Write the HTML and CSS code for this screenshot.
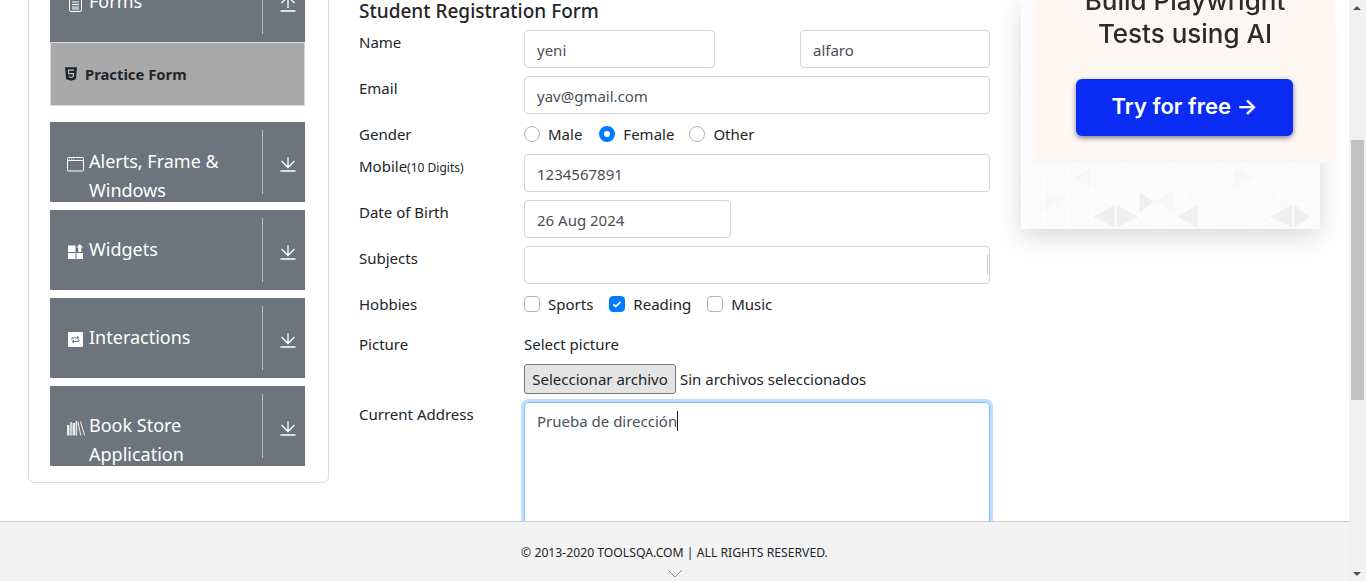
FILE: index.html
```html
<!DOCTYPE html>
<html lang="en">
<head>
    <meta charset="UTF-8" />
    <meta name="viewport" content="width=device-width, initial-scale=1" />
    <title>ToolsQA - Practice Form</title>
    <link rel="stylesheet" href="styles.css">
</head>
<body>
<div class="window">
    <div class="viewport">
        <div class="content">
            <aside class="sidebar">
                <div class="menu-item menu-open">
                    <div class="menu-title">
                        <svg class="menu-icon" viewBox="0 0 18 16"><rect x="2.500" y=".5" width="12" height="15" rx="1.500" fill="none" stroke="#fff"/><path d="M5 3.500h7M5 6h7M5 8.500h7M5 11h7M5 13h7" stroke="#fff"/></svg>
                        <span>Forms</span>
                    </div>
                    <div class="menu-arrow">
                        <svg class="arrow-icon" viewBox="0 0 16 16"><path d="M8 12V.5M1.500 7L8 .5 14.500 7M.5 15h15" fill="none" stroke="#fff" stroke-width="1.300"/></svg>
                    </div>
                </div>
                <div class="submenu-item">
                    <svg class="html-icon" viewBox="0 0 14 16"><path d="M0 0h14l-1.300 14L7 16l-5.700-2z" fill="#212529"/><path d="M10.500 3.500H4l.3 4h5.700l-.4 3.500L7 12l-2.600-1" fill="none" stroke="#c4c4c4" stroke-width="1.300"/></svg>
                    <span>Practice Form</span>
                </div>
                <div class="menu-item menu-first">
                    <div class="menu-title">
                        <svg class="menu-icon" viewBox="0 0 18 16"><rect x=".5" y="1.500" width="16" height="13.500" rx="1" fill="none" stroke="#fff"/><path d="M1 4.500h15" stroke="#fff"/><path d="M2 3h1M4 3h1M6 3h1" stroke="#fff" stroke-width=".8"/></svg>
                        <span>Alerts, Frame &amp; Windows</span>
                    </div>
                    <div class="menu-arrow">
                        <svg class="arrow-icon" viewBox="0 0 16 16"><path d="M8 1v10.500M1.500 5L8 11.500 14.500 5M.5 15h15" fill="none" stroke="#fff" stroke-width="1.300"/></svg>
                    </div>
                </div>
                <div class="menu-item">
                    <div class="menu-title">
                        <svg class="menu-icon" viewBox="0 0 18 16"><path d="M1 1.500h7.500V8H1zM1 9h7.500v6H1zM9.500 9H16v6H9.500zM12.800 0L16 3.500h-1.700V8h-3V3.500H9.500z" fill="#fff"/></svg>
                        <span>Widgets</span>
                    </div>
                    <div class="menu-arrow">
                        <svg class="arrow-icon" viewBox="0 0 16 16"><path d="M8 1v10.500M1.500 5L8 11.500 14.500 5M.5 15h15" fill="none" stroke="#fff" stroke-width="1.300"/></svg>
                    </div>
                </div>
                <div class="menu-item">
                    <div class="menu-title">
                        <svg class="menu-icon" viewBox="0 0 18 16"><rect x="1" y="0" width="15" height="15" rx="1" fill="#fff"/><path d="M5 8V5.800h6.500M10 4.200l1.800 1.600L10 7.400M12 7.200v2.300H5.500M7 8l-1.800 1.500L7 11" fill="none" stroke="#6c757d" stroke-width="1"/></svg>
                        <span>Interactions</span>
                    </div>
                    <div class="menu-arrow">
                        <svg class="arrow-icon" viewBox="0 0 16 16"><path d="M8 1v10.500M1.500 5L8 11.500 14.500 5M.5 15h15" fill="none" stroke="#fff" stroke-width="1.300"/></svg>
                    </div>
                </div>
                <div class="menu-item">
                    <div class="menu-title">
                        <svg class="menu-icon" viewBox="0 0 18 16"><path d="M0 5h2.500v10.500H0zM3.200 2h1.600v13.500H3.200zM5.500 3H8v12.500H5.500zM8.600 1h1.600v14.500H8.600z" fill="#fff" opacity=".85"/><path d="M11 2l2.800 13.500M13.500 1.500l4.200 14" fill="none" stroke="#fff" stroke-width=".9"/></svg>
                        <span>Book Store Application</span>
                    </div>
                    <div class="menu-arrow">
                        <svg class="arrow-icon" viewBox="0 0 16 16"><path d="M8 1v10.500M1.500 5L8 11.500 14.500 5M.5 15h15" fill="none" stroke="#fff" stroke-width="1.300"/></svg>
                    </div>
                </div>
            </aside>

            <main class="form-col">
                <h5 class="form-title">Student Registration Form</h5>
                <div class="row">
                    <label class="row-label">Name</label>
                    <div class="name-fields">
                        <input class="field field-first" value="yeni">
                        <input class="field field-last" value="alfaro">
                    </div>
                </div>
                <div class="row">
                    <label class="row-label">Email</label>
                    <input class="field field-full" value="yav@gmail.com">
                </div>
                <div class="row">
                    <label class="row-label">Gender</label>
                    <div class="options">
                        <span class="option option-male"><i class="radio"></i>Male</span>
                        <span class="option option-female"><i class="radio checked"></i>Female</span>
                        <span class="option"><i class="radio"></i>Other</span>
                    </div>
                </div>
                <div class="row">
                    <label class="row-label">Mobile<small class="hint">(10 Digits)</small></label>
                    <input class="field field-full" value="1234567891">
                </div>
                <div class="row">
                    <label class="row-label">Date of Birth</label>
                    <input class="field field-date" value="26 Aug 2024">
                </div>
                <div class="row">
                    <label class="row-label">Subjects</label>
                    <div class="field field-full subjects"><i class="subjects-mark"></i></div>
                </div>
                <div class="row row-hobbies">
                    <label class="row-label">Hobbies</label>
                    <div class="options">
                        <span class="option"><i class="check"></i>Sports</span>
                        <span class="option"><i class="check checked">
                            <svg viewBox="0 0 16 16"><path d="M4 8.500l2.500 2.500L12 5.500" fill="none" stroke="#fff" stroke-width="2"/></svg>
                        </i>Reading</span>
                        <span class="option"><i class="check"></i>Music</span>
                    </div>
                </div>
                <div class="row">
                    <label class="row-label">Picture</label>
                    <div class="file-box">
                        <div class="file-label">Select picture</div>
                        <div class="file-line"><button class="file-btn">Seleccionar archivo</button><span class="file-name">Sin archivos seleccionados</span></div>
                    </div>
                </div>
                <div class="row">
                    <label class="row-label">Current Address</label>
                    <div class="address">Prueba de dirección<i class="caret"></i></div>
                </div>
            </main>

            <div class="ad">
                <svg class="ad-pattern" viewBox="0 0 300 229">
                    <defs>
                        <pattern id="tri" width="47" height="46" patternUnits="userSpaceOnUse" patternTransform="translate(0 -2)">
                            <rect width="47" height="46" fill="#fbfbfb"/>
                            <path d="M0 0v46M23.500 0v46M47 0v46M0 0l47 23M0 23l47 23M0 23L47 0M0 46l47-23" stroke="#fff" stroke-width="1.200" fill="none"/>
                        </pattern>
                    </defs>
                    <rect width="300" height="229" fill="url(#tri)"/>
                    <path d="M119 192l14 10-14 11zM94 205l-22 12 22 11zM96 205l22 12-22 11zM177 205l-20 12 20 11zM272 205l-22 12 22 11zM274 205l16 12-16 11z" fill="#f0f0f0"/>
                    <path d="M154 190l-20 12 20 11zM25 190l16 10-16 10zM215 168l16 10-16 10zM70 168l-16 10 16 10z" fill="#f7f7f7"/>
                </svg>
                <div class="ad-card">
                    <div class="ad-heading">Build Playwright<br>Tests using AI</div>
                    <div class="ad-button">Try for free →</div>
                </div>
            </div>
        </div>

        <footer class="footer">
            <span>© 2013-2020 TOOLSQA.COM | ALL RIGHTS RESERVED.</span>
            <svg class="footer-chevron" viewBox="0 0 14 8"><path d="M.5.500L7 7 13.500.500" fill="none" stroke="#888" stroke-width="1"/></svg>
        </footer>
    </div>

    <div class="scrollbar">
        <div class="scroll-up"></div>
        <div class="scroll-track"><div class="scroll-thumb"></div></div>
        <div class="scroll-down"></div>
    </div>
</div>
</body>
</html>
```
FILE: styles.css
```css
* {
    box-sizing: border-box;
}
html, body {
    margin: 0;
    height: 581px;
    overflow: hidden;
}
body {
    font-family: "Noto Sans", "Open Sans", sans-serif;
    font-size: 15px;
    line-height: 24px;
    color: #212529;
    background: #fff;
}
.window {
    display: flex;
    height: 581px;
}
.viewport {
    flex: 1;
    display: flex;
    flex-direction: column;
    min-width: 0;
}
.content {
    height: 521px;
    display: flex;
    overflow: hidden;
    padding-left: 28px;
}

/* sidebar */
.sidebar {
    width: 301px;
    height: 541px;
    margin-top: -58px;
    padding: 19px 23px 16px 21px;
    border: 1px solid #dcdcdc;
    border-radius: 6px;
    flex-shrink: 0;
}
.menu-item {
    display: flex;
    height: 80px;
    margin-bottom: 8px;
    background: #6c757d;
    color: #fff;
    overflow: hidden;
}
.menu-open {
    margin-bottom: 0;
}
.menu-item:last-child {
    margin-bottom: 0;
}
.menu-first {
    margin-top: 16px;
}
.menu-title {
    width: 212px;
    display: flex;
    align-items: flex-start;
    padding: 25px 8px 0 17px;
    font-size: 18px;
    line-height: 29px;
}
.menu-icon {
    width: 18px;
    height: 16px;
    margin: 9px 4px 0 0;
    flex-shrink: 0;
}
.menu-arrow {
    flex: 1;
    margin: 8px 0;
    padding: 26px 0 0 17px;
    border-left: 1px solid #b5bac0;
}
.arrow-icon {
    display: block;
    width: 16px;
    height: 16px;
}
.submenu-item {
    display: flex;
    align-items: center;
    gap: 8px;
    height: 64px;
    padding-left: 14px;
    background: #a9a9a9;
    border: 1px solid #d6d9dd;
    font-size: 14.800px;
    font-weight: 700;
}
.html-icon {
    width: 12px;
    height: 14px;
}

/* form */
.form-col {
    width: 631px;
    margin-left: 30px;
    flex-shrink: 0;
}
.form-title {
    margin: 0 0 8px;
    font-size: 19px;
    font-weight: 500;
    line-height: 22px;
}
.row {
    display: flex;
    margin-bottom: 8px;
}
.row-hobbies {
    margin-bottom: 16px;
}
.row-label {
    width: 165px;
    flex-shrink: 0;
}
.hint {
    font-size: 12px;
}
.field {
    height: 38px;
    padding: 7px 12px 5px;
    border: 1px solid #ced4da;
    border-radius: 4px;
    color: #495057;
    font: inherit;
    background: #fff;
}
.name-fields {
    width: 466px;
    display: flex;
    justify-content: space-between;
}
.field-first {
    width: 191px;
}
.field-last {
    width: 190px;
}
.field-full {
    width: 466px;
}
.field-date {
    width: 207px;
}
.subjects {
    display: flex;
    justify-content: flex-end;
    align-items: center;
    padding: 0;
}
.subjects-mark {
    width: 1px;
    height: 20px;
    margin-right: 1px;
    background: #ccc;
}
.options {
    display: flex;
}
.option {
    display: flex;
    align-items: center;
    gap: 8px;
    margin-right: 16px;
}
.option-male {
    margin-right: 17px;
}
.option-female {
    margin-right: 15px;
}
.radio, .check {
    width: 16px;
    height: 16px;
    border: 1px solid #adb5bd;
    background: #fff;
    flex-shrink: 0;
}
.radio {
    border-radius: 50%;
}
.check {
    border-radius: 4px;
}
.radio.checked {
    border: 5px solid #007bff;
}
.check.checked {
    background: #007bff;
    border-color: #007bff;
}
.check svg {
    display: block;
    width: 14px;
    height: 14px;
}
.file-label {
    margin-bottom: 8px;
}
.file-line {
    display: flex;
    align-items: center;
    gap: 4px;
}
.file-btn {
    width: 152px;
    height: 30px;
    padding: 0;
    border: 1px solid #767676;
    border-radius: 3px;
    background: #e4e4e4;
    color: #212529;
    font: inherit;
}
.address {
    width: 466px;
    height: 150px;
    padding: 6px 12px;
    border: 1px solid #80bdff;
    border-radius: 4px;
    box-shadow: 0 0 0 3px rgba(0,123,255,.25);
    color: #495057;
}
.caret {
    display: inline-block;
    width: 1px;
    height: 20px;
    margin-bottom: -4px;
    background: #212529;
}

/* ad */
.ad {
    position: relative;
    width: 299px;
    height: 229px;
    margin-left: 31px;
    flex-shrink: 0;
    box-shadow: 0 8px 24px rgba(0,0,0,.15);
}
.ad-pattern {
    display: block;
    width: 299px;
    height: 229px;
}
.ad-card {
    position: absolute;
    left: 14px;
    top: -20px;
    width: 300px;
    height: 183px;
    display: flex;
    flex-direction: column;
    align-items: center;
    background: #fcf7f2;
    font-family: Inter, sans-serif;
}
.ad-heading {
    height: 79px;
    margin-bottom: 20px;
    padding-top: 4px;
    font-size: 26px;
    font-weight: 500;
    line-height: 33px;
    text-align: center;
    color: #2b2b2b;
    filter: blur(.4px);
}
.ad-button {
    width: 217px;
    height: 57px;
    margin-right: 1px;
    border-radius: 6px;
    background: #0a2cf5;
    box-shadow: 0 2px 5px rgba(0,0,40,.5);
    color: #fff;
    font-size: 22px;
    font-weight: 600;
    line-height: 55px;
    text-align: center;
}

/* footer */
.footer {
    height: 60px;
    display: flex;
    flex-direction: column;
    align-items: center;
    padding-top: 19px;
    border-top: 1px solid #ccc;
    background: #f3f3f3;
    font-size: 12.200px;
    line-height: 24px;
}
.footer-chevron {
    width: 14px;
    height: 8px;
    margin-top: 5px;
}

/* scrollbar */
.scrollbar {
    width: 17px;
    display: flex;
    flex-direction: column;
    background: #f1f1f1;
}
.scroll-up, .scroll-down {
    height: 17px;
    flex-shrink: 0;
    position: relative;
}
.scroll-up::after, .scroll-down::after {
    content: "";
    position: absolute;
    left: 4px;
    width: 0;
    height: 0;
    border-left: 4px solid transparent;
    border-right: 4px solid transparent;
}
.scroll-up::after {
    top: 6px;
    border-bottom: 4px solid #505050;
}
.scroll-down::after {
    bottom: 5px;
    border-top: 4px solid #505050;
}
.scroll-track {
    flex: 1;
    padding-top: 123px;
}
.scroll-thumb {
    width: 13px;
    height: 260px;
    margin-left: 2px;
    background: #c1c1c1;
}
```
